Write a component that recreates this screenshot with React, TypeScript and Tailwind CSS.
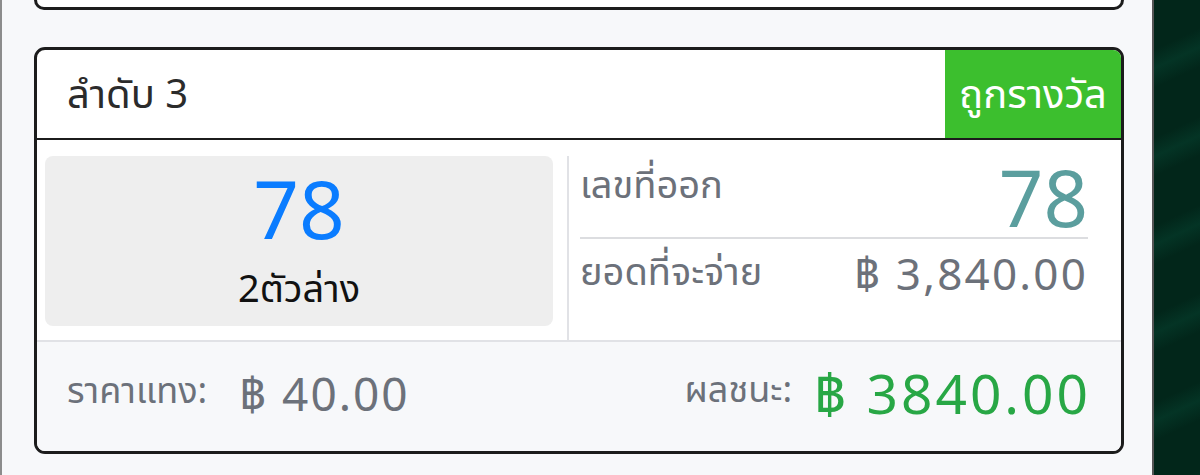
import React from "react";

const font = { fontFamily: '"Noto Sans", "Noto Sans Thai", "Loma", "Garuda", "Kinnari", sans-serif' };

export default function App() {
  return (
    <div className="flex h-[475px] w-[1200px] overflow-hidden bg-[#f7f8fa]" style={font}>
      <div className="w-[2px] shrink-0 bg-[#8c8c8c]" />
      <div className="flex w-[1150px] shrink-0 flex-col pl-[32px] pr-[28px]">
        {/* previous card bottom */}
        <div className="-mt-[20px] h-[30px] rounded-b-[10px] border-[3px] border-t-0 border-[#1c1c1c] bg-white" />
        {/* card */}
        <div className="mt-[37px] flex h-[407px] flex-col overflow-hidden rounded-[11px] border-[3px] border-[#1c1c1c] bg-white">
          <div className="flex h-[90px] shrink-0 items-stretch justify-between border-b-2 border-[#1c1c1c]">
            <div className="flex items-center pl-[30px] pb-[2px] text-[40px] text-[#2b2b2b]">ลำดับ 3</div>
            <div className="flex w-[176px] items-center justify-center bg-[#3cbf2e] pb-[2px] text-[40px] text-white">ถูกรางวัล</div>
          </div>
          <div className="flex h-[200px] shrink-0 bg-white">
            <div className="pl-[8px] pr-[14px] pt-[16px]">
              <div className="flex h-[170px] w-[508px] flex-col items-center rounded-[8px] bg-[#eeeeee] pt-[12px]">
                <div className="text-[80px] leading-none text-[#0a7cff]">78</div>
                <div className="mt-[20px] text-[38px] leading-none text-[#111111]">2ตัวล่าง</div>
              </div>
            </div>
            <div className="mt-[16px] flex w-[552px] flex-col border-l-2 border-[#e1e2e6] pl-[11px] pr-[31px]">
              <div className="flex h-[83px] items-start justify-between border-b-2 border-[#dcdde0]">
                <div className="pt-[8px] text-[38px] leading-none text-[#6c717a]">เลขที่ออก</div>
                <div className="pt-[2px] text-[78px] leading-none text-[#5b9e9e]">78</div>
              </div>
              <div className="flex items-start justify-between pt-[12px]">
                <div className="text-[38px] leading-none text-[#6c717a]">ยอดที่จะจ่าย</div>
                <div className="text-[44px] leading-none tracking-[2.2px] text-[#6c717a]">฿ 3,840.00</div>
              </div>
            </div>
          </div>
          <div className="flex flex-1 items-center justify-between border-t-2 border-[#e1e2e6] bg-[#f7f8fa] pl-[30px] pr-[30px] pb-[8px]">
            <div className="flex items-center gap-[32px]">
              <span className="pb-[6px] text-[36px] leading-none text-[#6c717a]">ราคาแทง:</span>
              <span className="text-[46px] leading-none tracking-[2px] text-[#6c717a]">฿ 40.00</span>
            </div>
            <div className="flex items-center gap-[22px]">
              <span className="pb-[8px] text-[36px] leading-none text-[#6c717a]">ผลชนะ:</span>
              <span className="text-[55px] leading-none tracking-[3px] text-[#28a745]">฿ 3840.00</span>
            </div>
          </div>
        </div>
      </div>
      <div className="w-[2px] shrink-0 bg-[#555555]" />
      <div className="flex-1 bg-[repeating-linear-gradient(155deg,#02261a_0px,#02261a_45px,#043425_62px,#02261a_80px)]" />
    </div>
  );
}
